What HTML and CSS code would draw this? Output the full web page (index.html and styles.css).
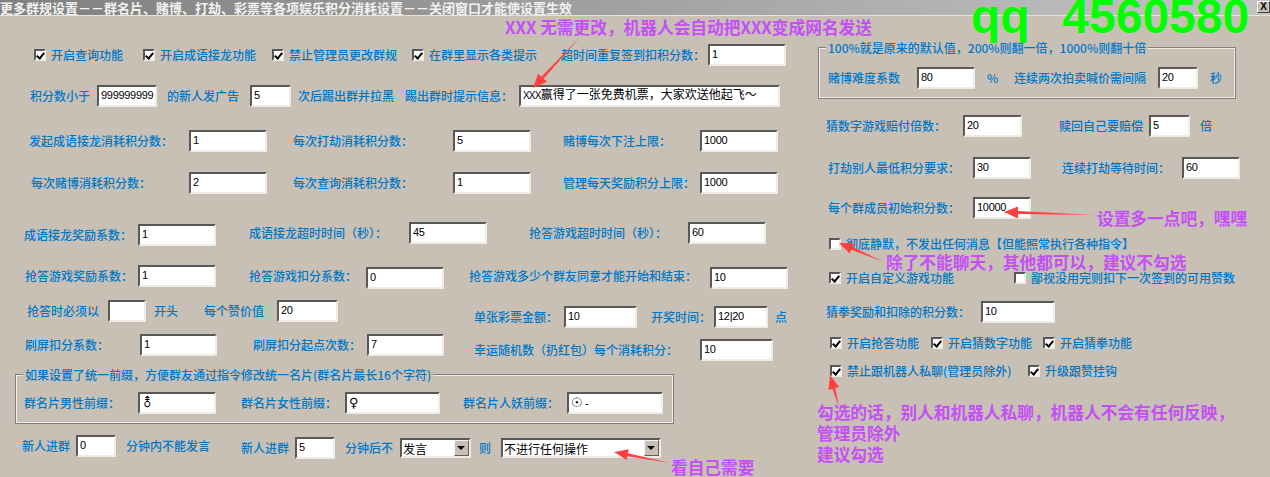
FILE: index.html
```html
<!DOCTYPE html>
<html lang="zh-CN">
<head>
<meta charset="utf-8">
<title>更多群规设置</title>
<link rel="stylesheet" href="styles.css">
</head>
<body>
<div class="dialog">
  <div class="titlebar">
    <span class="title">更多群规设置－－群名片、赌博、打劫、彩票等各项娱乐积分消耗设置－－关闭窗口才能使设置生效</span>
    <span class="close">X</span>
  </div>
  <div class="main">
    <div class="left">
      <div class="row l1">
        <label class="chk"><i class="cb on"></i>开启查询功能</label>
        <label class="chk"><i class="cb on"></i>开启成语接龙功能</label>
        <label class="chk"><i class="cb on"></i>禁止管理员更改群规</label>
        <label class="chk"><i class="cb on"></i>在群里显示各类提示</label>
        <span>超时间重复签到扣积分数：</span>
        <div class="box w78">1</div>
      </div>
      <div class="row l2">
        <span>积分数小于</span>
        <div class="box w60">999999999</div>
        <span>的新人发广告</span>
        <div class="box w41">5</div>
        <span>次后踢出群并拉黑</span>
        <span>踢出群时提示信息：</span>
        <div class="box w261"><span class="mono">XXX</span>赢得了一张免费机票，大家欢送他起飞～</div>
      </div>
      <div class="row l3">
        <span>发起成语接龙消耗积分数：</span>
        <div class="box w78">1</div>
        <span>每次打劫消耗积分数：</span>
        <div class="box w78">5</div>
        <span>赌博每次下注上限：</span>
        <div class="box w78">1000</div>
      </div>
      <div class="row l4">
        <span>每次赌博消耗积分数：</span>
        <div class="box w78">2</div>
        <span>每次查询消耗积分数：</span>
        <div class="box w78">1</div>
        <span>管理每天奖励积分上限：</span>
        <div class="box w78">1000</div>
      </div>
      <div class="row l5">
        <span class="low">成语接龙奖励系数：</span>
        <div class="box w78 low">1</div>
        <span>成语接龙超时时间（秒）：</span>
        <div class="box w78">45</div>
        <span>抢答游戏超时时间（秒）：</span>
        <div class="box w78">60</div>
      </div>
      <div class="row l6">
        <span>抢答游戏奖励系数：</span>
        <div class="box w78">1</div>
        <span>抢答游戏扣分系数：</span>
        <div class="box w78 low">0</div>
        <span>抢答游戏多少个群友同意才能开始和结束：</span>
        <div class="box w78 low">10</div>
      </div>
      <div class="split">
        <div class="stack">
          <div class="row l7a">
            <span>抢答时必须以</span>
            <div class="box w38"></div>
            <span>开头</span>
            <span>每个赞价值</span>
            <div class="box w61">20</div>
          </div>
          <div class="row l8a">
            <span>刷屏扣分系数：</span>
            <div class="box w77">1</div>
            <span>刷屏扣分起点次数：</span>
            <div class="box w77">7</div>
          </div>
        </div>
        <div class="stack stack-low">
          <div class="row l7b">
            <span>单张彩票金额：</span>
            <div class="box w73">10</div>
            <span>开奖时间：</span>
            <div class="box w54">12|20</div>
            <span>点</span>
          </div>
          <div class="row l8b">
            <span>幸运随机数（扔红包）每个消耗积分：</span>
            <div class="box w73">10</div>
          </div>
        </div>
      </div>
      <div class="group group-a">
        <div class="legend">如果设置了统一前缀，方便群友通过指令修改统一名片(群名片最长16个字符)</div>
        <div class="row la">
          <span>群名片男性前缀：</span>
          <div class="box w78"><span class="sym">⚨</span></div>
          <span>群名片女性前缀：</span>
          <div class="box w95"><span class="sym">♀</span></div>
          <span>群名片人妖前缀：</span>
          <div class="box w96"><span class="sym">☉</span> -</div>
        </div>
      </div>
      <div class="row lb">
        <span>新人进群</span>
        <div class="box w40">0</div>
        <span>分钟内不能发言</span>
        <span class="low">新人进群</span>
        <div class="box w40 low">5</div>
        <span class="low">分钟后不</span>
        <div class="box select w71 low"><span>发言</span><i class="drop"></i></div>
        <span class="low">则</span>
        <div class="box select w160 low"><span>不进行任何操作</span><i class="drop"></i></div>
      </div>
    </div>
    <div class="right">
      <div class="group group-b">
        <div class="legend">100%就是原来的默认值，200%则翻一倍，1000%则翻十倍</div>
        <div class="row ra">
          <span>赌博难度系数</span>
          <div class="box w58">80</div>
          <span>%</span>
          <span>连续两次拍卖喊价需间隔</span>
          <div class="box w40">20</div>
          <span>秒</span>
        </div>
      </div>
      <div class="row rb">
        <span>猜数字游戏赔付倍数：</span>
        <div class="box w59">20</div>
        <span>赎回自己要赔偿</span>
        <div class="box w41">5</div>
        <span>倍</span>
      </div>
      <div class="row rc">
        <span>打劫别人最低积分要求：</span>
        <div class="box w58">30</div>
        <span>连续打劫等待时间：</span>
        <div class="box w58">60</div>
      </div>
      <div class="row rd">
        <span>每个群成员初始积分数：</span>
        <div class="box w58">10000</div>
      </div>
      <div class="row re">
        <label class="chk"><i class="cb"></i>彻底静默，不发出任何消息【但能照常执行各种指令】</label>
      </div>
      <div class="row rf">
        <label class="chk"><i class="cb on"></i>开启自定义游戏功能</label>
        <label class="chk"><i class="cb"></i>鄙视没用完则扣下一次签到的可用赞数</label>
      </div>
      <div class="row rg">
        <span>猜拳奖励和扣除的积分数：</span>
        <div class="box w74">10</div>
      </div>
      <div class="row rh">
        <label class="chk"><i class="cb on"></i>开启抢答功能</label>
        <label class="chk"><i class="cb on"></i>开启猜数字功能</label>
        <label class="chk"><i class="cb on"></i>开启猜拳功能</label>
      </div>
      <div class="row ri">
        <label class="chk"><i class="cb on"></i>禁止跟机器人私聊(管理员除外)</label>
        <label class="chk"><i class="cb on"></i>升级跟赞挂钩</label>
      </div>
    </div>
  </div>
</div>
<svg class="arrows" width="1270" height="477" viewBox="0 0 1270 477" aria-hidden="true">
  <polygon points="580,37 543.6,78.7 546.9,81.8 533,88 538.1,73.6 541.4,76.7"/>
  <polygon points="1094,215 1018,214 1018,218.5 1004,212 1018,206.5 1018,211"/>
  <polygon points="884,262 851.3,249.8 849.8,253.5 839,243 854,243.3 852.5,247"/>
  <polygon points="839,407 832.4,388.9 828.5,390 830,375 839.1,387 835.2,388.1"/>
  <polygon points="670,463 627.4,456.2 626.6,460.1 614,452 628.8,449.3 628,453.2"/>
</svg>
<div class="qq">qq  4560580</div>
<div class="note n1">XXX 无需更改，机器人会自动把XXX变成网名发送</div>
<div class="note n2">设置多一点吧，嘿嘿</div>
<div class="note n3">除了不能聊天，其他都可以，建议不勾选</div>
<div class="note n4">勾选的话，别人和机器人私聊，机器人不会有任何反映，<br>管理员除外<br>建议勾选</div>
<div class="note n5">看自己需要</div>
</body>
</html>
```
FILE: styles.css
```css
html, body {
  margin: 0;
  padding: 0;
  width: 1270px;
  height: 477px;
  overflow: hidden;
  background: #c8c0b5;
}
body {
  position: relative;
  font-family: "Noto Sans CJK SC", "Liberation Sans", sans-serif;
  font-size: 12px;
  line-height: 16px;
  font-weight: 500;
  color: #0078c8;
}
.titlebar {
  height: 15px;
  border-bottom: 1px solid #e8e4dc;
  background: linear-gradient(90deg, #808080, #c4c4c4);
  display: flex;
  justify-content: space-between;
  align-items: flex-start;
}
.title {
  font-size: 13px;
  line-height: 15px;
  font-weight: 700;
  color: #f2f2f2;
  white-space: nowrap;
}
.close {
  width: 13px;
  height: 12px;
  margin-top: 1px;
  box-sizing: border-box;
  background: #c8c0b5;
  border: 1px solid;
  border-color: #fff #404040 #404040 #fff;
  font: 700 10px/10px "Liberation Sans", sans-serif;
  color: #000;
  text-align: center;
}
.main { display: flex; align-items: flex-start; }
.left { width: 810px; flex: none; }
.right { flex: 1; }

.row {
  display: grid;
  align-items: center;
  height: 22px;
  white-space: nowrap;
}
.row > * { justify-self: start; }
.low { margin-top: 4px; }

.box {
  box-sizing: border-box;
  height: 22px;
  padding: 1px 0 0 2px;
  background: #fff;
  border: 2px solid;
  border-color: #585858 #efece6 #efece6 #585858;
  color: #000;
  font: 11px/15px "Liberation Sans", "Noto Sans CJK SC", sans-serif;
  letter-spacing: -0.3px;
  overflow: hidden;
}
.mono { font-size: 10px; letter-spacing: -0.8px; }
.sym { font-family: "DejaVu Sans", sans-serif; font-size: 13px; }
.w38 { width: 38px; } .w40 { width: 40px; } .w41 { width: 41px; }
.w54 { width: 54px; } .w58 { width: 58px; } .w59 { width: 59px; }
.w60 { width: 60px; } .w61 { width: 61px; } .w71 { width: 71px; }
.w73 { width: 73px; } .w74 { width: 74px; } .w77 { width: 77px; }
.w78 { width: 78px; } .w95 { width: 95px; } .w96 { width: 96px; }
.w160 { width: 160px; } .w261 { width: 261px; }
.w261 { font-size: 12px; letter-spacing: 0; }

.select {
  height: 20px;
  display: flex;
  justify-content: space-between;
  align-items: center;
  padding: 0 0 0 1px;
  font-size: 12px;
  letter-spacing: 0;
}
.select > span { font-family: "Noto Sans CJK SC", sans-serif; }
.drop {
  width: 15px;
  height: 16px;
  flex: none;
  box-sizing: border-box;
  background: #c8c0b5;
  border: 1px solid;
  border-color: #f4f2ee #606060 #606060 #f4f2ee;
  position: relative;
}
.drop::after {
  content: "";
  position: absolute;
  left: 2px;
  top: 5px;
  border: 4px solid transparent;
  border-top: 4px solid #000;
  border-bottom: 0;
}

.chk { display: inline-flex; align-items: center; gap: 5px; }
.cb {
  box-sizing: border-box;
  width: 12px;
  height: 12px;
  background: #fff;
  border: 2px solid;
  border-color: #585858 #efece6 #efece6 #585858;
  flex: none;
  position: relative;
}
.cb.on::after {
  content: "";
  position: absolute;
  left: 1.5px;
  top: -0.5px;
  width: 3px;
  height: 6px;
  border: solid #000;
  border-width: 0 2px 2px 0;
  transform: rotate(40deg);
}

.group {
  box-sizing: border-box;
  border: 1px solid #808080;
  box-shadow: 0 0 0 1px #f0ede7 inset;
}
.legend {
  width: fit-content;
  margin: -8px 0 0 7px;
  padding: 0 2px;
  background: #c8c0b5;
  white-space: nowrap;
}

/* left column */
.l1 { margin-top: 28px; padding-left: 34px; grid-template-columns: 109px 129px 140px 149px 147px auto; }
.l2 { margin-top: 19px; padding-left: 30px; grid-template-columns: 67px 70px 83px 48px 107px 114px auto; }
.l3 { margin-top: 23px; padding-left: 29px; grid-template-columns: 160px 104px 160px 110px 137px auto; }
.l4 { margin-top: 20px; padding-left: 31px; grid-template-columns: 158px 104px 160px 110px 137px auto; }
.l5 { margin-top: 26px; padding-left: 24px; grid-template-columns: 114px 111px 160px 120px 159px auto; }
.l6 { margin-top: 21px; padding-left: 25px; grid-template-columns: 113px 111px 117px 103px 241px auto; }
.split { display: flex; }
.stack { width: 474px; flex: none; }
.stack-low { width: auto; padding-top: 6px; }
.l7a { margin-top: 15px; padding-left: 27px; grid-template-columns: 81px 46px 50px 73px auto; }
.l8a { margin-top: 12px; padding-left: 25px; grid-template-columns: 115px 113px 114px auto; }
.l7b { margin-top: 15px; grid-template-columns: 90px 87px 63px 61px auto; }
.l8b { margin-top: 11px; grid-template-columns: 226px auto; }
.group-a { width: 659px; height: 50px; margin: 13px 0 0 15px; }
.la { margin-top: 9px; padding-left: 8px; grid-template-columns: 114px 103px 104px 118px 104px auto; }
.lb { margin-top: 9px; padding-left: 22px; grid-template-columns: 54px 50px 115px 54px 50px 55px 79px 22px auto; }

/* right column */
.group-b { width: 418px; height: 52px; margin: 31px 0 0 8px; }
.ra { margin-top: 11px; padding-left: 9px; grid-template-columns: 89px 70px 27px 144px 52px auto; }
.rb { margin-top: 16px; padding-left: 16px; grid-template-columns: 137px 96px 90px 51px auto; }
.rc { margin-top: 20px; padding-left: 18px; grid-template-columns: 145px 89px 120px auto; }
.rd { margin-top: 18px; padding-left: 18px; grid-template-columns: 145px auto; }
.re { margin-top: 17px; height: 16px; padding-left: 19px; grid-template-columns: auto; }
.rf { margin-top: 15px; padding-left: 19px; grid-template-columns: 185px auto; }
.rg { margin-top: 12px; padding-left: 16px; grid-template-columns: 155px auto; }
.rh { margin-top: 9px; padding-left: 20px; grid-template-columns: 101px 112px auto; }
.ri { margin-top: 6px; padding-left: 20px; grid-template-columns: 198px auto; }

/* annotations over the dialog */
.arrows { position: absolute; left: 0; top: 0; pointer-events: none; }
.arrows polygon { fill: #ff4040; }
.qq {
  position: absolute;
  left: 971px;
  top: -3px;
  font: 700 48px/40px "Liberation Sans", sans-serif;
  word-spacing: 3px;
  color: #00ff00;
  white-space: pre;
}
.note {
  position: absolute;
  font-size: 16.7px;
  line-height: 21px;
  font-weight: 700;
  color: #c44ff5;
  white-space: nowrap;
}
.n1 { left: 505px; top: 17px; }
.n2 { left: 1097px; top: 208px; }
.n3 { left: 886px; top: 252px; }
.n4 { left: 817px; top: 402px; }
.n5 { left: 671px; top: 457px; }
```
